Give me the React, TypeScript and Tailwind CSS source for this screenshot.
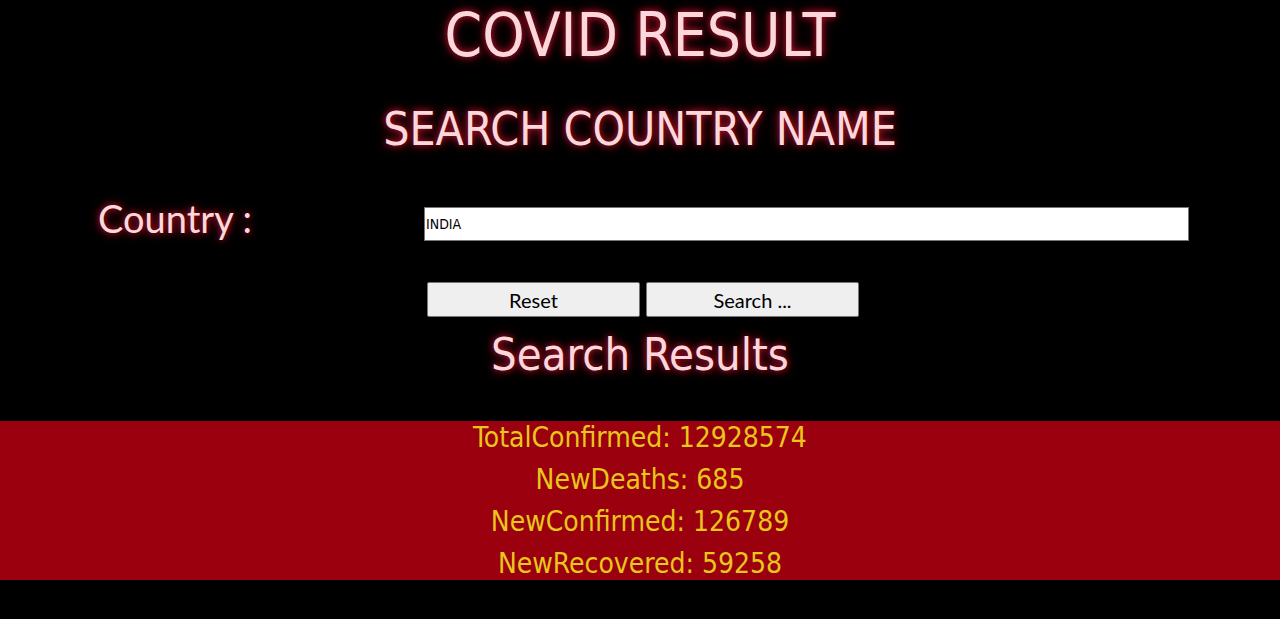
import { useState } from "react";

const glow = "[text-shadow:0_0_6px_#b3132a,0_0_12px_#8a0d1f]";
const heading = "font-['DejaVu_Sans_Condensed','DejaVu_Sans',sans-serif] text-[#fcd8dc] text-center";
const comic = "font-['Comic_Sans_MS','Lato',sans-serif]";

const results = [
  { label: "TotalConfirmed", value: 12928574 },
  { label: "NewDeaths", value: 685 },
  { label: "NewConfirmed", value: 126789 },
  { label: "NewRecovered", value: 59258 },
];

export default function App() {
  const [country, setCountry] = useState("INDIA");

  return (
    <div className="min-h-[619px] w-full overflow-hidden bg-black">
      <h1 className={`${heading} ${glow} text-[60px] leading-[70px]`}>COVID RESULT</h1>
      <h2 className={`${heading} ${glow} mt-[31px] text-[46px] leading-[56px]`}>SEARCH COUNTRY NAME</h2>

      <div className="mt-[50px] flex items-start">
        <label className={`${comic} ${glow} ml-[98px] w-[326px] text-[38px] leading-[22px] text-[#fcd8dc]`}>
          Country :
        </label>
        <input
          value={country}
          onChange={(e) => setCountry(e.target.value)}
          className="h-[34px] w-[765px] border border-[#767676] bg-white px-[1px] font-['DejaVu_Sans_Condensed','DejaVu_Sans',sans-serif] text-[14px] text-black outline-none"
        />
      </div>

      <div className="mt-[41px] flex gap-[6px] pl-[427px]">
        <button
          onClick={() => setCountry("")}
          className={`${comic} h-[35px] w-[213px] rounded-[2px] border border-[#767676] bg-[#efefef] text-[20px] text-black`}
        >
          Reset
        </button>
        <button className={`${comic} h-[35px] w-[213px] rounded-[2px] border border-[#767676] bg-[#efefef] text-[20px] text-black`}>
          Search ...
        </button>
      </div>

      <h2 className={`${heading} ${glow} mt-[10px] text-[45px] leading-[56px]`}>Search Results</h2>

      <div className="mt-[38px] h-[159px] overflow-hidden bg-[#9b000e] text-center font-['DejaVu_Sans_Condensed','DejaVu_Sans',sans-serif] text-[28px] leading-[42px] text-[#e8c61c]">
        <div className="-mt-[4px]">
          {results.map((r) => (
            <p key={r.label}>
              {r.label}: {r.value}
            </p>
          ))}
        </div>
      </div>
    </div>
  );
}
